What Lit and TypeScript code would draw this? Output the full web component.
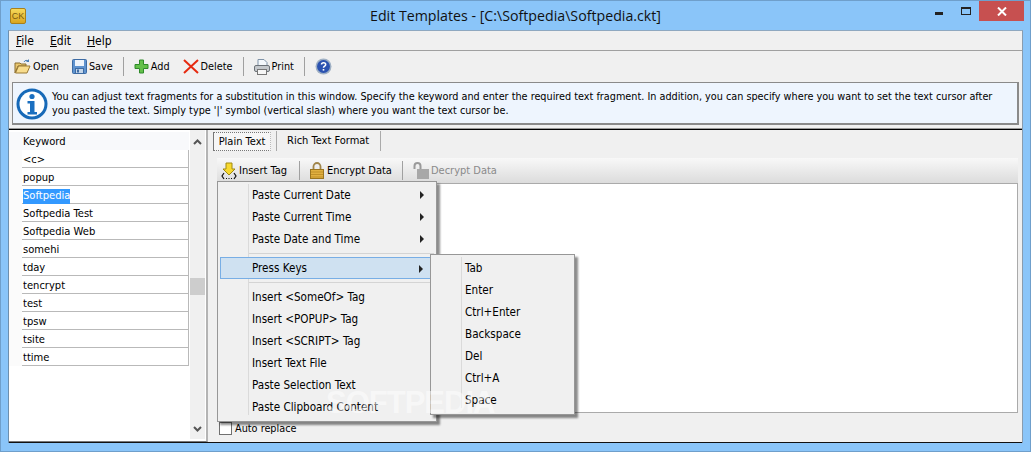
import { LitElement, html, css, svg } from "lit";
import { customElement } from "lit/decorators.js";

const openIcon = svg`<svg width="17" height="16" viewBox="0 0 17 16"><path d="M1 4h5l1 1h5v2H4L1 14z" fill="#e9c66e" stroke="#8a6d2f"/><path d="M1.5 14L4.5 7H16l-3 7z" fill="#f8dc8c" stroke="#9a7a34"/><path d="M10 3c1-2 3-2 4-1" fill="none" stroke="#4a7fb5"/><path d="M15 0v3h-3z" fill="#4a7fb5"/></svg>`;
const saveIcon = svg`<svg width="15" height="15" viewBox="0 0 15 15"><rect x=".5" y=".5" width="14" height="14" rx="1" fill="#5f93cf" stroke="#3d6ba3"/><rect x="3" y="1" width="9" height="6" fill="#eef4fb"/><rect x="3.5" y="9.5" width="8" height="5" fill="#c4d6ea" stroke="#3d6ba3"/><rect x="5" y="10.5" width="2" height="3" fill="#3d6ba3"/></svg>`;
const addIcon = svg`<svg width="15" height="15" viewBox="0 0 15 15"><path d="M5.5 1h4v4.500H14v4H9.500V14h-4V9.500H1v-4h4.500z" fill="#63c04a" stroke="#2f8a2a"/></svg>`;
const delIcon = svg`<svg width="16" height="15" viewBox="0 0 16 15"><path d="M1 1l14 13M15 1L1 14" stroke="#e62a10" stroke-width="2" fill="none"/></svg>`;
const printIcon = svg`<svg width="16" height="16" viewBox="0 0 16 16"><path d="M4 .5h6l3 3V7H4z" fill="#f4f8fc" stroke="#7f93a8"/><rect x=".5" y="6.500" width="15" height="6" rx="1.500" fill="#c4c8cc" stroke="#6c7278"/><rect x="3.500" y="10.500" width="9" height="5" fill="#f6f6f6" stroke="#777"/></svg>`;
const helpIcon = svg`<svg width="17" height="17" viewBox="0 0 17 17"><circle cx="8.500" cy="8.500" r="8" fill="#9fb0c4"/><circle cx="8.500" cy="8.500" r="6.500" fill="#2b52b0"/><path d="M6.500 6.500c0-2.500 4.200-2.500 4.200 0 0 1.700-2.200 1.500-2.200 3.300" fill="none" stroke="#fff" stroke-width="1.500"/><rect x="7.700" y="11" width="1.600" height="1.600" fill="#fff"/></svg>`;
const infoIcon = svg`<svg width="32" height="32" viewBox="0 0 32 32"><circle cx="16" cy="16" r="15.500" fill="#1669b8"/><circle cx="16" cy="16" r="12.500" fill="#fff"/><circle cx="16" cy="8.500" r="2.600" fill="#1a6fc0"/><path d="M11.500 13h7v11h2.500v2.500H11.500V24H14v-8.500h-2.500z" fill="#1a6fc0"/></svg>`;
const tagIcon = svg`<svg width="16" height="18" viewBox="0 0 16 18"><path d="M5 1h6v6h3l-6 6-6-6h3z" fill="#f8d92e" stroke="#a08a10"/><path d="M3 11l-2 3 2 3M13 11l2 3-2 3M5 16.500h1M7.500 16.500h1M10 16.500h1" fill="none" stroke="#111" stroke-width="1.200"/></svg>`;
const lockIcon = svg`<svg width="14" height="17" viewBox="0 0 14 17"><path d="M3.500 8V4.500a3.500 3.500 0 0 1 7 0V8" fill="none" stroke="#a0854a" stroke-width="1.800"/><rect x=".5" y="7.500" width="13" height="9" fill="#e0b040" stroke="#9a7520"/><path d="M1 10h12M1 12.500h12M1 15h12" stroke="#c09028"/></svg>`;
const unlockIcon = svg`<svg width="16" height="17" viewBox="0 0 16 17"><path d="M1.500 7V4a3 3 0 0 1 6 0v3" fill="none" stroke="#9a9a9a" stroke-width="2"/><rect x="4" y="7" width="12" height="10" fill="#a8a8a8"/></svg>`;

const keywords = ["<c>", "popup", "Softpedia", "Softpedia Test", "Softpedia Web", "somehi", "tday", "tencrypt", "test", "tpsw", "tsite", "ttime"];
type MI = { t: string; arrow?: boolean; sep?: boolean; hot?: boolean };
const mainMenu: MI[] = [
  { t: "Paste Current Date", arrow: true },
  { t: "Paste Current Time", arrow: true },
  { t: "Paste Date and Time", arrow: true },
  { t: "", sep: true },
  { t: "Press Keys", arrow: true, hot: true },
  { t: "", sep: true },
  { t: "Insert <SomeOf> Tag" },
  { t: "Insert <POPUP> Tag" },
  { t: "Insert <SCRIPT> Tag" },
  { t: "Insert Text File" },
  { t: "Paste Selection Text" },
  { t: "Paste Clipboard Content" },
];
const subMenu: MI[] = ["Tab", "Enter", "Ctrl+Enter", "Backspace", "Del", "Ctrl+A", "Space"].map((t) => ({ t }));

@customElement("app-root")
export class AppRoot extends LitElement {
  static styles = css`
    :host { display: block; width: 1031px; height: 452px; position: relative; overflow: hidden; background: #8ac5f9;
      font-family: "DejaVu Sans", sans-serif; font-stretch: condensed; font-size: 11px; color: #000; box-sizing: border-box; border: 1px solid #6f9fcb; }
    * { box-sizing: border-box; }
    svg { flex: none; }
    .title { height: 29px; display: flex; align-items: flex-start; position: relative; justify-content: center; }
    .logo { position: absolute; left: 9px; top: 7px; width: 16px; height: 16px; background: linear-gradient(#f7d95a, #d9a520); border: 1px solid #a8801c; border-radius: 2px; font: 9px "Liberation Sans", sans-serif; color: #7a5a10; text-align: center; line-height: 14px; }
    .title-text { font-family: "Open Sans", sans-serif; font-stretch: normal; font-size: 14.2px; line-height: 30px; color: #111; }
    .controls { position: absolute; right: 6px; top: 0; display: flex; align-items: flex-start; }
    .min { width: 8px; height: 3px; background: #222; margin: 11px 18px 0 0; }
    .max { width: 10px; height: 8px; border: 1px solid #222; border-top-width: 2px; margin: 6px 8px 0 0; }
    .close { width: 45px; height: 20px; background: #c75050; color: #fff; display: flex; align-items: center; justify-content: center; }
    .win { margin: 0 7px; width: 1015px; height: 413px; background: #f0f0f0; display: flex; flex-direction: column; border-left: 1px solid #6d8fae; border-top: 1px solid #8fa8c0; border-right: 1px solid #8a9cae; }
    .menubar { height: 20px; display: flex; gap: 16px; padding-left: 7px; align-items: center; font-size: 12px; border-bottom: 1px solid #a0a0a0; flex: none; }
    .menubar u { text-decoration: underline; }
    .toolbar { height: 31px; flex: none; display: flex; align-items: center; padding-left: 5px; font-size: 10.8px; }
    .tb { display: flex; align-items: center; gap: 2px; }
    .tsep { width: 1px; height: 19px; background: #a0a0a0; margin: 0 10px; }
    .gapl { margin-left: 13px; }
    .info { flex: none; height: 43px; margin: 0 3px; background: #eef5fe; border: 1px solid #8a8a8a; display: flex; align-items: center; padding: 1px 0 0 3px; gap: 4px; font-size: 10.77px; line-height: 14px; white-space: nowrap; border-width: 1px 2px 2px 1px; }
    .main { flex: 1; min-height: 0; margin-top: 4px; border-top: 1px solid #000; display: flex; border-bottom: 1px solid #111; box-shadow: 0 -1px 0 #999; }
    .left { width: 199px; flex: none; background: #fff; border-right: 2px solid #b4b4b4; border-bottom: 1px solid #777; display: flex; }
    .gut { width: 13px; flex: none; }
    .gut div { height: 18px; margin-top: 2px; background: #f8f9fb; }
    .gut span { display: block; height: 216px; background: #fbfbfb; }
    .list { width: 167px; flex: none; padding-top: 2px; font-size: 11.1px; }
    .head { height: 18px; background: #f8f9fb; padding-left: 1px; line-height: 20px; }
    .row { height: 18px; border-bottom: 1px solid #b9b9b9; border-right: 1px solid #b9b9b9; padding-left: 1px; line-height: 19px; }
    .sel { background: #3399ff; color: #fff; display: inline-block; line-height: 14px; height: 15px; }
    .sb { width: 15px; margin-left: 1px; margin-bottom: 2px; background: #f0f0f0; display: flex; flex-direction: column; align-items: center; }
    .sb-up { height: 24px; padding-top: 9px; flex: none; line-height: 0; }
    .thumb { width: 15px; height: 17px; margin-top: 124px; background: #cdcdcd; flex: none; }
    .sb-fill { flex: 1; }
    .sb-down { height: 13px; flex: none; line-height: 0; }
    .right { flex: 1; padding: 0 5px 0 5px; display: flex; flex-direction: column; min-width: 0; }
    .tabs { height: 21px; flex: none; display: flex; font-size: 11px; margin-top: 1px; }
    .tab1 { width: 58px; height: 19px; border: 1px dotted #777; border-right-color: #bbb; border-left: 1px solid #777; text-align: center; line-height: 18px; background: #f6f6f6; margin-top: 1px; }
    .tabdiv { width: 1px; height: 20px; background: #aaa; margin: 0 5px 0 5px; }
    .tab2 { width: 99px; text-align: left; line-height: 19px; padding-left: 5px; border-right: 1px solid #aaa; height: 20px; }
    .panel { margin: 6px 0 0 4px; width: 801px; flex: none; display: flex; flex-direction: column; }
    .ptool { height: 25px; background: linear-gradient(#f8f8f8, #dcdcdc); display: flex; align-items: center; padding-left: 4px; font-size: 11px; }
    .ptool .tsep { margin: 0 10px; height: 19px; }
    .ptool .wide { margin-left: 12px; }
    .ptool .tb.lk { gap: 3px; }
    .dis { color: #8a8a8a; }
    .editor { height: 230px; background: #fff; border: 1px solid #aaa; }
    .auto { display: flex; align-items: center; gap: 3px; margin: 8px 0 0 2px; font-size: 10.8px; line-height: 15px; }
    .cb { width: 13px; height: 13px; background: #fff; border: 1px solid #707070; }
    .menu { position: absolute; background: #f0f0f0; border: 1px solid #979797; padding: 2px; box-shadow: 3px 3px 2px rgba(0, 0, 0, .45); font-size: 11.6px; display: flex; flex-direction: column; }
    .m1 { left: 216px; top: 180px; width: 220px; height: 241px; }
    .m2 { left: 429px; top: 253px; width: 145px; height: 161px; }
    .gline { position: absolute; top: 2px; bottom: 6px; width: 1px; background: #dadada; }
    .m1 .gline { left: 30px; }
    .m2 .gline { left: 30px; }
    .item { height: 22px; display: flex; align-items: center; padding-left: 32px; position: relative; }
    .item.hot { background: #cfe1f1; border: 1px solid #78aee5; padding-left: 31px; }
    .arrow { position: absolute; right: 10px; top: 7px; width: 0; height: 0; border-left: 4px solid #222; border-top: 4px solid transparent; border-bottom: 4px solid transparent; }
    .msep { height: 7px; margin-left: 28px; display: flex; align-items: center; }
    .msep::after { content: ""; flex: 1; height: 1px; background: #d4d4d4; }
    .wm { position: absolute; left: 325px; top: 384px; font-family: "Liberation Sans", sans-serif; font-stretch: normal; font-weight: 700; font-size: 31px; letter-spacing: -1px; color: rgba(255, 255, 255, .5); pointer-events: none; }
  `;

  private menuItems(items: MI[]) {
    return items.map((m) =>
      m.sep
        ? html`<div class="msep"></div>`
        : html`<div class="item ${m.hot ? "hot" : ""}">${m.t}${m.arrow ? html`<span class="arrow"></span>` : ""}</div>`
    );
  }

  render() {
    return html`
      <div class="title">
        <div class="logo">CK</div>
        <div class="title-text">Edit Templates - [C:\\Softpedia\\Softpedia.ckt]</div>
        <div class="controls">
          <div class="min"></div><div class="max"></div>
          <div class="close"><svg width="10" height="9" viewBox="0 0 10 9"><path d="M1 .5l8 8M9 .5l-8 8" stroke="#fff" stroke-width="2"/></svg></div>
        </div>
      </div>
      <div class="win">
        <div class="menubar"><span><u>F</u>ile</span><span><u>E</u>dit</span><span><u>H</u>elp</span></div>
        <div class="toolbar">
          <div class="tb">${openIcon}<span>Open</span></div>
          <div class="tb gapl">${saveIcon}<span>Save</span></div>
          <div class="tsep"></div>
          <div class="tb">${addIcon}<span>Add</span></div>
          <div class="tb gapl">${delIcon}<span>Delete</span></div>
          <div class="tsep"></div>
          <div class="tb">${printIcon}<span>Print</span></div>
          <div class="tsep"></div>
          <div class="tb">${helpIcon}</div>
        </div>
        <div class="info">${infoIcon}
          <div>
            <div>You can adjust text fragments for a substitution in this window. Specify the keyword and enter the required text fragment. In addition, you can specify where you want to set the text cursor after</div>
            <div>you pasted the text. Simply type '|' symbol (vertical slash) where you want the text cursor be.</div>
          </div>
        </div>
        <div class="main">
          <div class="left">
            <div class="gut"><div></div><span></span></div>
            <div class="list">
              <div class="head">Keyword</div>
              ${keywords.map((k) => html`<div class="row">${k === "Softpedia" ? html`<span class="sel">${k}</span>` : k}</div>`)}
            </div>
            <div class="sb">
              <div class="sb-up"><svg width="9" height="6" viewBox="0 0 9 6"><path d="M1 5l3.500-3.500L8 5" fill="none" stroke="#555" stroke-width="2"/></svg></div>
              <div class="thumb"></div>
              <div class="sb-fill"></div>
              <div class="sb-down"><svg width="9" height="6" viewBox="0 0 9 6"><path d="M1 1l3.500 3.500L8 1" fill="none" stroke="#555" stroke-width="2"/></svg></div>
            </div>
          </div>
          <div class="right">
            <div class="tabs">
              <div class="tab1">Plain Text</div>
              <div class="tabdiv"></div>
              <div class="tab2">Rich Text Format</div>
            </div>
            <div class="panel">
              <div class="ptool">
                <div class="tb">${tagIcon}<span>Insert Tag</span></div>
                <div class="tsep wide"></div>
                <div class="tb lk">${lockIcon}<span>Encrypt Data</span></div>
                <div class="tsep"></div>
                <div class="tb dis">${unlockIcon}<span>Decrypt Data</span></div>
              </div>
              <div class="editor"></div>
              <div class="auto"><div class="cb"></div><span>Auto replace</span></div>
            </div>
          </div>
        </div>
      </div>
      <div class="menu m1"><div class="gline"></div>${this.menuItems(mainMenu)}</div>
      <div class="menu m2"><div class="gline"></div>${this.menuItems(subMenu)}</div>
      <div class="wm">SOFTPEDIA</div>
    `;
  }
}
